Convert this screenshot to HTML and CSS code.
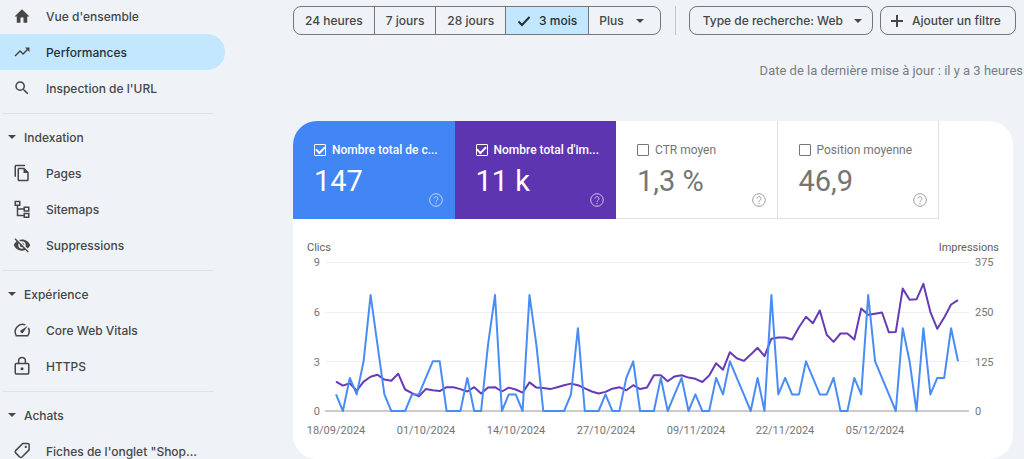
FILE: index.html
```html
<!DOCTYPE html>
<html lang="fr">
<head>
<meta charset="utf-8">
<meta name="viewport" content="width=device-width, initial-scale=1">
<title>Performances</title>
<link rel="stylesheet" href="styles.css">
</head>
<body>
<div class="app">
  <nav class="sidebar">
    <a class="item" href="#"><svg class="icon" viewBox="0 0 24 24"><path d="M10 21v-7h4v7h5v-8.500h3L12 3 2 12.500h3V21z"/></svg><span>Vue d'ensemble</span></a>
    <a class="item active" href="#"><svg class="icon" viewBox="0 0 24 24"><path d="M16 6l2.290 2.290-4.880 4.880-4-4L2 16.590 3.410 18l6-6 4 4 6.300-6.290L22 12V6z"/></svg><span>Performances</span></a>
    <a class="item" href="#"><svg class="icon" viewBox="0 0 24 24"><path d="M15.5 14h-.79l-.28-.27A6.47 6.47 0 0 0 16 9.5 6.5 6.5 0 1 0 9.5 16c1.61 0 3.09-.59 4.23-1.57l.27.28v.79l5 4.99L20.49 19zm-6 0C7.01 14 5 11.99 5 9.5S7.01 5 9.5 5 14 7.01 14 9.5 11.99 14 9.5 14z"/></svg><span>Inspection de l'URL</span></a>

    <section class="group">
      <button class="group-title" type="button"><svg class="caret" viewBox="0 0 8 4"><path d="M0 0h8L4 4z"/></svg>Indexation</button>
      <a class="item" href="#"><svg class="icon" viewBox="0 0 24 24"><path d="M16 1H4C2.9 1 2 1.9 2 3v14h2V3h12zM15 5H8c-1.1 0-2 .9-2 2v14c0 1.100.9 2 2 2h11c1.100 0 2-.9 2-2V11zM8 21V7h6v5h5v9z"/></svg><span>Pages</span></a>
      <a class="item" href="#"><svg class="icon line" viewBox="0 0 24 24"><path d="M3 2h6v5H3zM15 9.500h6v5h-6zM15 18h6v5h-6zM6 7v13.500h9M6 12h9"/></svg><span>Sitemaps</span></a>
      <a class="item" href="#"><svg class="icon" viewBox="0 0 24 24"><path d="M12 7c2.760 0 5 2.240 5 5 0 .65-.13 1.260-.36 1.830l2.920 2.920c1.510-1.260 2.700-2.890 3.430-4.750-1.730-4.390-6-7.500-11-7.500-1.400 0-2.740.25-3.980.7l2.160 2.160C10.740 7.130 11.350 7 12 7zM2 4.270l2.280 2.280.46.46C3.080 8.300 1.780 10.020 1 12c1.730 4.390 6 7.500 11 7.500 1.550 0 3.030-.3 4.380-.84l.42.42L19.730 22 21 20.730 3.270 3zM7.530 9.800l1.550 1.550c-.05.21-.08.43-.08.65 0 1.660 1.340 3 3 3 .22 0 .44-.03.65-.08l1.550 1.550c-.67.33-1.410.53-2.200.53-2.760 0-5-2.240-5-5 0-.79.2-1.530.53-2.200zm4.310-.78l3.150 3.150.02-.16c0-1.660-1.340-3-3-3z"/></svg><span>Suppressions</span></a>
    </section>

    <section class="group">
      <button class="group-title" type="button"><svg class="caret" viewBox="0 0 8 4"><path d="M0 0h8L4 4z"/></svg>Expérience</button>
      <a class="item" href="#"><svg class="icon line" viewBox="0 0 24 24"><path d="M16.500 5.200A10 10 0 0 0 4.300 19.500h15.400a10 10 0 0 0 .8-10.300"/><path class="solid" d="M19.500 6.500l-8.900 5.700a2.200 2.200 0 1 0 3.100 3.100z"/></svg><span>Core Web Vitals</span></a>
      <a class="item" href="#"><svg class="icon line" viewBox="0 0 24 24"><rect x="3" y="8.500" width="18" height="14" rx="1.500"/><path d="M7.500 8.500V5a4.500 4.500 0 0 1 9 0v3.500"/><circle class="solid" cx="12" cy="15.500" r="2"/></svg><span>HTTPS</span></a>
    </section>

    <section class="group">
      <button class="group-title" type="button"><svg class="caret" viewBox="0 0 8 4"><path d="M0 0h8L4 4z"/></svg>Achats</button>
      <a class="item" href="#"><svg class="icon line" viewBox="0 0 24 24"><path d="M13 2h6.500q2 0 2 2v6.500L12 20q-1.500 1.300-3 0l-5.500-5.500q-1.300-1.500 0-3z"/><circle class="solid" cx="17" cy="6.500" r="1.500"/></svg><span>Fiches de l'onglet "Shop...</span></a>
    </section>
  </nav>

  <main class="main">
    <div class="filters">
      <div class="periods">
        <button type="button">24 heures</button>
        <button type="button">7 jours</button>
        <button type="button">28 jours</button>
        <button type="button" class="selected" aria-pressed="true"><svg class="check" viewBox="0 0 14 12"><path d="M1.500 6.500l3.500 3.500L12.500 2"/></svg>3 mois</button>
        <button type="button" class="more">Plus<svg class="caret" viewBox="0 0 8 4"><path d="M0 0h8L4 4z"/></svg></button>
      </div>
      <span class="separator"></span>
      <button type="button" class="chip">Type de recherche: Web<svg class="caret" viewBox="0 0 8 4"><path d="M0 0h8L4 4z"/></svg></button>
      <button type="button" class="chip add"><svg class="plus" viewBox="0 0 12 12"><path d="M6 0v12M0 6h12"/></svg>Ajouter un filtre</button>
    </div>

    <p class="updated">Date de la dernière mise à jour : il y a 3 heures</p>

    <section class="card">
      <div class="metrics">
        <div class="metric clicks">
          <label><input type="checkbox" checked><span>Nombre total de c...</span></label>
          <strong>147</strong>
          <svg class="help" viewBox="0 0 14 14"><circle cx="7" cy="7" r="6.300"/><path d="M5 5.600a2 2 0 1 1 3.300 1.500C7.500 7.700 7 8 7 8.800M7 10v1.200"/></svg>
        </div>
        <div class="metric impressions">
          <label><input type="checkbox" checked><span>Nombre total d'im...</span></label>
          <strong>11 k</strong>
          <svg class="help" viewBox="0 0 14 14"><circle cx="7" cy="7" r="6.300"/><path d="M5 5.600a2 2 0 1 1 3.300 1.500C7.500 7.700 7 8 7 8.800M7 10v1.200"/></svg>
        </div>
        <div class="metric">
          <label><input type="checkbox"><span>CTR moyen</span></label>
          <strong>1,3 %</strong>
          <svg class="help" viewBox="0 0 14 14"><circle cx="7" cy="7" r="6.300"/><path d="M5 5.600a2 2 0 1 1 3.300 1.500C7.500 7.700 7 8 7 8.800M7 10v1.200"/></svg>
        </div>
        <div class="metric">
          <label><input type="checkbox"><span>Position moyenne</span></label>
          <strong>46,9</strong>
          <svg class="help" viewBox="0 0 14 14"><circle cx="7" cy="7" r="6.300"/><path d="M5 5.600a2 2 0 1 1 3.300 1.500C7.500 7.700 7 8 7 8.800M7 10v1.200"/></svg>
        </div>
      </div>

      <svg class="chart" viewBox="0 0 720 240" role="img" aria-label="Clics et impressions par jour">
        <path class="grid" d="M32 43.500H676M32 93.500H676M32 142.500H676"/>
        <path class="axis" d="M32 192H676"/>
        <polyline class="series-impressions" id="impressions"/>
        <polyline class="series-clicks" id="clicks"/>
        <g class="titles">
          <text x="14" y="32">Clics</text>
          <text x="706" y="32" text-anchor="end">Impressions</text>
        </g>
        <g text-anchor="end">
          <text x="27" y="47">9</text><text x="27" y="97">6</text><text x="27" y="147">3</text><text x="27" y="196">0</text>
        </g>
        <g>
          <text x="682" y="47">375</text><text x="682" y="97">250</text><text x="682" y="147">125</text><text x="682" y="196">0</text>
        </g>
        <g text-anchor="middle">
          <text x="43" y="215">18/09/2024</text><text x="133" y="215">01/10/2024</text><text x="223" y="215">14/10/2024</text><text x="313" y="215">27/10/2024</text><text x="403" y="215">09/11/2024</text><text x="492" y="215">22/11/2024</text><text x="582" y="215">05/12/2024</text>
        </g>
      </svg>
    </section>
  </main>
</div>
<script src="chart.js"></script>
</body>
</html>
```

FILE: styles.css
```css
* { box-sizing: border-box; }

body {
  margin: 0;
  background: #eff3f8;
  color: #444746;
  font-family: Inter, "Open Sans", sans-serif;
  font-size: 12px;
  font-weight: 500;
}

button {
  font: inherit;
  color: inherit;
  background: none;
  border: 0;
  padding: 0;
}

.app {
  display: flex;
  height: 100vh;
  overflow: hidden;
}

.sidebar {
  flex: 0 0 225px;
  margin-top: -2px;
}

.item {
  display: flex;
  align-items: center;
  gap: 15px;
  height: 36px;
  padding-left: 13px;
  border-radius: 0 18px 18px 0;
  color: inherit;
  text-decoration: none;
  white-space: nowrap;
}

.item.active {
  background: #c2e7ff;
  color: #1f2f3a;
}

.icon {
  width: 18px;
  height: 18px;
  overflow: visible;
  fill: #444746;
}

.icon.line {
  fill: none;
  stroke: #444746;
  stroke-width: 2;
}

.icon .solid {
  fill: #444746;
  stroke: none;
}

.caret {
  width: 8px;
  height: 4px;
  fill: #444746;
}

.group { padding-top: 7px; }

.group::before {
  content: "";
  display: block;
  margin: 0 11px 5px 3px;
  border-top: 1px solid #dfe3e7;
}

.group-title {
  display: flex;
  align-items: center;
  gap: 8px;
  height: 36px;
  padding-left: 8px;
}

.main {
  flex: 1;
  min-width: 0;
  padding: 6px 11px 0 68px;
}

.filters {
  display: flex;
  align-items: center;
  height: 29px;
  margin-right: -5px;
  white-space: nowrap;
}

.periods {
  display: flex;
  flex: none;
  height: 29px;
  border: 1px solid #747775;
  border-radius: 8px;
  overflow: hidden;
}

.periods button {
  display: flex;
  align-items: center;
  padding: 0 11px;
}

.periods button + button { border-left: 1px solid #747775; }

.periods .selected {
  background: #c2e7ff;
  color: #1f2f3a;
}

.periods .more {
  gap: 12px;
  padding: 0 16px 0 10px;
}

.check {
  width: 14px;
  height: 12px;
  margin-right: 8px;
  fill: none;
  stroke: #1f2f3a;
  stroke-width: 2;
}

.separator {
  height: 29px;
  margin: 0 13px 0 14px;
  border-left: 1px solid #c4c7c5;
}

.chip {
  display: flex;
  align-items: center;
  gap: 11px;
  height: 29px;
  padding: 0 10px 0 13px;
  border: 1px solid #747775;
  border-radius: 8px;
}

.chip.add {
  gap: 9px;
  margin-left: 7px;
  padding: 0 14px 0 10px;
}

.plus {
  width: 12px;
  height: 12px;
  fill: none;
  stroke: #444746;
  stroke-width: 2;
}

.updated {
  display: flex;
  justify-content: flex-end;
  margin: 26px -10px 40px 0;
  color: #7a7d80;
  font: 400 13px/20px Roboto, sans-serif;
  white-space: nowrap;
}

.card {
  border-radius: 24px;
  background: #fff;
  color: #757575;
  font-family: Roboto, sans-serif;
  overflow: hidden;
}

.metrics {
  display: grid;
  grid-template-columns: repeat(4, 1fr);
  margin-right: 74px;
}

.metric {
  display: grid;
  grid-template-columns: 1fr auto;
  grid-template-rows: auto 1fr;
  align-items: end;
  height: 98px;
  padding: 20px 11px 11px 21px;
  border: solid #e0e0e0;
  border-width: 0 1px 1px 0;
}

.metric.clicks {
  background: #4285f4;
  border-color: #4285f4;
  color: #fff;
}

.metric.impressions {
  background: #5e35b1;
  border-color: #5e35b1;
  color: #fff;
}

.metric label {
  grid-column: 1 / 3;
  display: flex;
  align-items: center;
  gap: 6px;
  font-size: 12px;
  font-weight: 400;
  line-height: 18px;
  white-space: nowrap;
}

.metric.clicks label,
.metric.impressions label { font-weight: 500; }

.metric input {
  appearance: none;
  display: grid;
  place-items: center;
  flex: none;
  width: 12px;
  height: 12px;
  margin: 0;
  border: 1px solid currentColor;
  border-radius: 1px;
  color: inherit;
}

.metric input:checked::after {
  content: "";
  width: 7px;
  height: 4px;
  margin-bottom: 2px;
  border: solid currentColor;
  border-width: 0 0 2px 2px;
  transform: rotate(-45deg);
}

.metric strong {
  align-self: start;
  padding-top: 4px;
  font-size: 29px;
  font-weight: 400;
  line-height: 36px;
  white-space: nowrap;
}

.help {
  width: 14px;
  height: 14px;
  fill: none;
  stroke: currentColor;
  opacity: 0.7;
}

.chart {
  display: block;
  width: 100%;
  fill: #757575;
  font-size: 11px;
  font-weight: 400;
}

.chart .titles { fill: #616161; }

.grid { stroke: #eeeeee; }

.axis {
  stroke: #cccccc;
  stroke-width: 2;
}

.series-clicks,
.series-impressions {
  fill: none;
  stroke-width: 2;
  stroke-linejoin: round;
}

.series-clicks { stroke: #4a8cf5; }

.series-impressions { stroke: #673ab7; }
```

FILE: chart.js
```js
// Daily values from 18/09/2024 to 17/12/2024.
const clicks = [
  1,0,2,1,3,7,4,1,0,0,0,1,1,2,3,3,0,0,0,2,0,0,4,7,0,1,1,0,7,4,
  0,0,0,0,1,5,0,0,0,1,0,0,2,3,0,0,0,2,0,1,2,0,1,0,0,2,1,3,2,1,
  0,2,0,7,1,2,1,1,3,2,1,1,2,0,0,2,1,7,3,2,1,0,5,3,0,5,1,2,2,5,3
];
const impressions = [
  74,64,70,51,74,86,91,79,76,94,54,45,37,55,52,50,60,60,55,49,60,44,59,60,49,59,54,46,72,59,
  58,55,60,65,69,65,57,49,44,48,56,60,52,65,55,59,90,90,75,87,90,84,81,73,89,120,104,148,133,126,
  142,159,138,182,185,185,180,211,237,221,253,192,174,195,195,180,258,242,245,248,198,199,308,280,281,320,249,207,235,268,279
];

function draw(id, values, max) {
  const left = 43, width = 622, bottom = 192, height = 149;
  const points = values.map((value, i) => {
    const x = left + i * width / (values.length - 1);
    const y = bottom - value / max * height;
    return x.toFixed(1) + "," + y.toFixed(1);
  });
  document.getElementById(id).setAttribute("points", points.join(" "));
}

draw("clicks", clicks, 9);
draw("impressions", impressions, 375);
```
